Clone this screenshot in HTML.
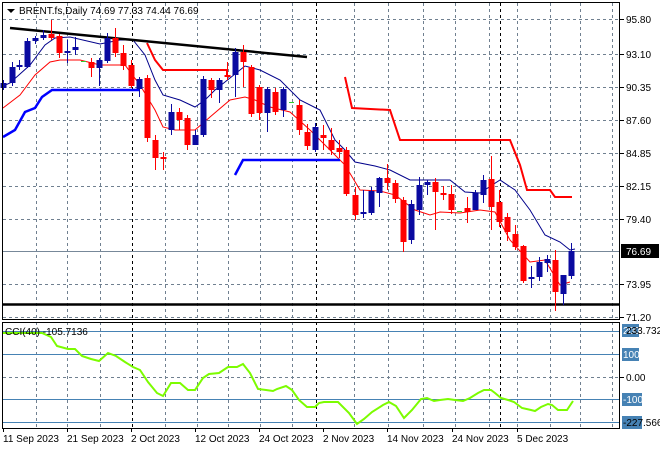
<!DOCTYPE html>
<html><head><style>
body{margin:0;background:#fff;}
svg text{font-family:"Liberation Sans",sans-serif;font-size:10px;}
</style></head><body>
<svg width="660" height="450" xmlns="http://www.w3.org/2000/svg">
<rect width="660" height="450" fill="#fff"/>
<g stroke="#708090" stroke-dasharray="3,3" stroke-width="1">
<path d="M3 19.5H620M3 54.5H620M3 87.5H620M3 120.5H620M3 153.5H620M3 186.5H620M3 219.5H620M3 284.5H620M3 317.5H620"/>
<path d="M3 377.5H620"/>
<path d="M36.5 3V320M36.5 322V428M100.5 3V320M100.5 322V428M165.5 3V320M165.5 322V428M228.5 3V320M228.5 322V428M292.5 3V320M292.5 322V428M354.5 3V320M354.5 322V428M388.5 3V320M388.5 322V428M423.5 3V320M423.5 322V428M455.5 3V320M455.5 322V428M489.5 3V320M489.5 322V428M550.5 3V320M550.5 322V428M580.5 3V320M580.5 322V428M612.5 3V320M612.5 322V428M67.5 3V320M67.5 322V428M197.5 3V320M197.5 322V428M260.5 3V320M260.5 322V428M517.5 3V320M517.5 322V428"/>
</g>
<g stroke="#000" stroke-dasharray="3,3"><path d="M132.5 3V320M132.5 322V428M316.5 3V320M316.5 322V428M500.5 3V320M500.5 322V428"/></g>
<path d="M3 251.5H620" stroke="#778899"/>
<g stroke="#4682b4"><path d="M3 331.5H620M3 354.5H620M3 399.5H620M3 422.5H620"/></g>
<!-- indicators -->
<polyline fill="none" stroke="#00008b" stroke-width="1" points="3,86 10,83 30,65 45,45 55,38 70,37 100,44 120,40 133,40 145,55 155,80 163,95 180,100 195,107 205,100 215,90 230,78 245,66 260,70 280,80 300,100 320,110 335,140 345,150 355,162 375,166 390,170 410,180 430,180 450,180 465,192 480,193 500,180 515,190 530,210 545,235 560,242 570,250 575,249"/>
<polyline fill="none" stroke="#f00" stroke-width="1" points="3,108 20,95 35,75 50,62 60,60 80,60 100,65 125,65 140,85 155,110 163,127 175,130 195,130 210,117 230,100 245,97 255,100 270,107 290,112 310,130 330,150 345,165 360,190 380,191 395,195 415,210 430,215 440,212 460,213 480,210 495,212 510,240 530,262 545,260 560,285 570,282"/>
<polyline fill="none" stroke="#f00" stroke-width="2" points="147,43 155,60 163,70 227,70 227,75"/>
<polyline fill="none" stroke="#f00" stroke-width="2" points="345,77 352,108 390,110 400,140 510,140 520,165 527,190 550,190 555,197 572,197"/>
<polyline fill="none" stroke="#00f" stroke-width="2.5" points="3,137 15,130 25,112 35,108 42,97 52,90 140,90"/>
<polyline fill="none" stroke="#00f" stroke-width="2.5" points="235,175 243,160 340,160"/>
<path d="M10 28L307 57" stroke="#000" stroke-width="2.5"/>
<path d="M3 304.5H620" stroke="#000" stroke-width="2.5"/>
<!-- red candles -->
<path stroke="#f00" d="M51.5 20V40M59.5 34V58M91.5 58V77M115.5 28V57M123.5 45V70M131.5 60V88M147.5 75V142M155.5 135V170M163.5 152V170M179.5 108V130M187.5 115V150M211.5 78V98M227.5 62V80M243.5 45V87M251.5 65V117M259.5 85V120M275.5 88V115M299.5 100V135M307.5 124V150M323.5 125V150M331.5 128V155M339.5 140V158M346.5 147V196M355.5 187V220M387.5 164V190M395.5 180V203M403.5 197V252M435.5 178V230M443.5 186V200M451.5 185V214M467.5 197V223M491.5 156V230M499.5 190V227M507.5 213V241M515.5 225V250M523.5 245V283M555.5 250V311"/>
<g fill="#f00">
<rect x="48.5" y="34" width="6" height="4"/><rect x="56.5" y="36" width="6" height="17"/><rect x="88.5" y="62" width="6" height="6"/><rect x="112.5" y="38" width="6" height="15"/><rect x="120.5" y="53" width="6" height="13"/><rect x="128.5" y="65" width="6" height="21"/><rect x="144.5" y="78" width="6" height="60"/><rect x="152.5" y="140" width="6" height="18"/><rect x="160.5" y="157" width="6" height="2"/><rect x="176.5" y="112" width="6" height="8"/><rect x="184.5" y="118" width="6" height="27"/><rect x="208.5" y="80" width="6" height="10"/><rect x="224.5" y="75" width="6" height="2"/><rect x="240.5" y="52" width="6" height="10"/><rect x="248.5" y="67" width="6" height="47"/><rect x="256.5" y="87" width="6" height="26"/><rect x="272.5" y="92" width="6" height="20"/><rect x="296.5" y="105" width="6" height="25"/><rect x="304.5" y="132" width="6" height="14"/><rect x="320.5" y="135" width="6" height="3"/><rect x="328.5" y="140" width="6" height="10"/><rect x="336.5" y="148" width="6" height="4"/><rect x="343.5" y="150" width="6" height="44"/><rect x="352.5" y="195" width="6" height="20"/><rect x="384.5" y="178" width="6" height="5"/><rect x="392.5" y="183" width="6" height="16"/><rect x="400.5" y="200" width="6" height="42"/><rect x="432.5" y="182" width="6" height="10"/><rect x="440.5" y="193" width="6" height="2"/><rect x="448.5" y="194" width="6" height="16"/><rect x="464.5" y="208" width="6" height="4"/><rect x="488.5" y="179" width="6" height="28"/><rect x="496.5" y="202" width="6" height="20"/><rect x="504.5" y="217" width="6" height="15"/><rect x="512.5" y="234" width="6" height="13"/><rect x="520.5" y="246" width="6" height="35"/><rect x="552.5" y="260" width="6" height="32"/>
</g>
<!-- blue candles -->
<path stroke="#0a0aa0" d="M3.5 80V90M12.5 62V86M19.5 60V70M27.5 38V68M35.5 36V44M43.5 30V40M67.5 40V63M75.5 37V55M99.5 58V86M107.5 33V63M139.5 77V97M171.5 104V135M195.5 130V145M203.5 76V137M219.5 78V103M235.5 48V97M267.5 87V132M283.5 87V117M315.5 123V152M363.5 190V218M371.5 187V215M379.5 177V207M411.5 200V244M419.5 177V215M427.5 180V195M475.5 190V210M483.5 175V203M531.5 266V288M539.5 257V281M547.5 255V272M563.5 275V305M571.5 243V279"/>
<g fill="#0a0aa0">
<rect x="0.5" y="83" width="6" height="5"/><rect x="9.5" y="67" width="6" height="16"/><rect x="16.5" y="65" width="6" height="2"/><rect x="24.5" y="41" width="6" height="26"/><rect x="32.5" y="38" width="6" height="3"/><rect x="40.5" y="35" width="6" height="3"/><rect x="64.5" y="51" width="6" height="2"/><rect x="72.5" y="47" width="6" height="3"/><rect x="96.5" y="60" width="6" height="8"/><rect x="104.5" y="38" width="6" height="23"/><rect x="136.5" y="79" width="6" height="10"/><rect x="168.5" y="112" width="6" height="18"/><rect x="192.5" y="135" width="6" height="10"/><rect x="200.5" y="79" width="6" height="56"/><rect x="216.5" y="80" width="6" height="10"/><rect x="232.5" y="52" width="6" height="23"/><rect x="264.5" y="89" width="6" height="24"/><rect x="280.5" y="89" width="6" height="21"/><rect x="312.5" y="127" width="6" height="23"/><rect x="360.5" y="212" width="6" height="2"/><rect x="368.5" y="191" width="6" height="22"/><rect x="376.5" y="178" width="6" height="15"/><rect x="408.5" y="204" width="6" height="36"/><rect x="416.5" y="185" width="6" height="25"/><rect x="424.5" y="182" width="6" height="3"/><rect x="472.5" y="193" width="6" height="17"/><rect x="480.5" y="180" width="6" height="15"/><rect x="528.5" y="277" width="6" height="2"/><rect x="536.5" y="262" width="6" height="15"/><rect x="544.5" y="259" width="6" height="4"/><rect x="560.5" y="275" width="6" height="19"/><rect x="568.5" y="251" width="6" height="25"/>
</g>
<g stroke="#32cd32"><path d="M81 61.5h5M289 102.5h5M457 211.5h5"/></g>
<polyline fill="none" stroke="#7cfc00" stroke-width="2" points="3,333 42,333 51,337 57,346 68,349 75,349 82,356 91,359 99,361 108,353 116,356 125,362 133,367 140,370 148,382 157,393 163,396 171,383 180,383 188,390 195,390 203,378 209,374 219,373 228,367 237,367 243,364 250,373 258,389 266,390 273,391 277,389 286,386 292,390 299,400 307,407 315,407 319,403 324,402 338,402 349,413 357,424 364,419 372,412 383,405 389,402 396,406 404,418 412,410 421,399 427,398 434,401 440,400 448,399 455,400 463,401 470,398 478,393 484,390 491,390 495,393 501,398 508,400 514,402 522,408 531,410 535,411 541,407 548,404 552,405 558,410 567,410 573,401"/>
<!-- frames -->
<rect x="2.5" y="2.5" width="617" height="317" fill="none" stroke="#000"/>
<rect x="2.5" y="322.5" width="617" height="106" fill="none" stroke="#000"/>
<g stroke="#000"><path d="M620 19.5h4M620 54.5h4M620 87.5h4M620 120.5h4M620 153.5h4M620 186.5h4M620 219.5h4M620 284.5h4M620 317.5h4M620 377.5h4"/></g>
<g fill="#000">
<text x="626" y="23">95.80</text><text x="626" y="58">93.10</text><text x="626" y="91">90.35</text><text x="626" y="124">87.60</text><text x="626" y="157">84.85</text><text x="626" y="190">82.15</text><text x="626" y="223">79.40</text><text x="626" y="288">73.95</text><text x="626" y="321">71.20</text><text x="626" y="381">0.00</text>
</g>
<rect x="621" y="244" width="38" height="14" fill="#000"/><text x="626" y="255" fill="#fff">76.69</text>
<g fill="#4682b4"><rect x="622" y="324" width="17" height="13"/><rect x="622" y="348" width="17" height="13"/><rect x="622" y="393" width="20" height="13"/><rect x="622" y="416" width="20" height="13"/></g>
<g fill="#fff"><text x="623" y="334">200</text><text x="623" y="358">100</text><text x="623" y="403">-100</text></g>
<text x="626" y="334" fill="#000">233.7321</text>
<text x="623" y="426" fill="#000">-227.566</text>
<path d="M7 9l4 4 4-4z" fill="#000"/>
<text x="19" y="14" fill="#000" font-size="10.5">BRENT.fs,Daily  74.69 77.33 74.44 76.69</text>
<text x="5" y="335" fill="#000">CCI(40) -105.7136</text>
<g fill="#000">
<text x="3" y="442">11 Sep 2023</text><text x="67" y="442">21 Sep 2023</text><text x="131" y="442">2 Oct 2023</text><text x="195" y="442">12 Oct 2023</text><text x="259" y="442">24 Oct 2023</text><text x="323" y="442">2 Nov 2023</text><text x="387" y="442">14 Nov 2023</text><text x="452" y="442">24 Nov 2023</text><text x="517" y="442">5 Dec 2023</text>
</g>
<g stroke="#000"><path d="M3.5 428v4M67.5 428v4M131.5 428v4M195.5 428v4M259.5 428v4M323.5 428v4M387.5 428v4M452.5 428v4M517.5 428v4"/></g>
</svg>
</body></html>
